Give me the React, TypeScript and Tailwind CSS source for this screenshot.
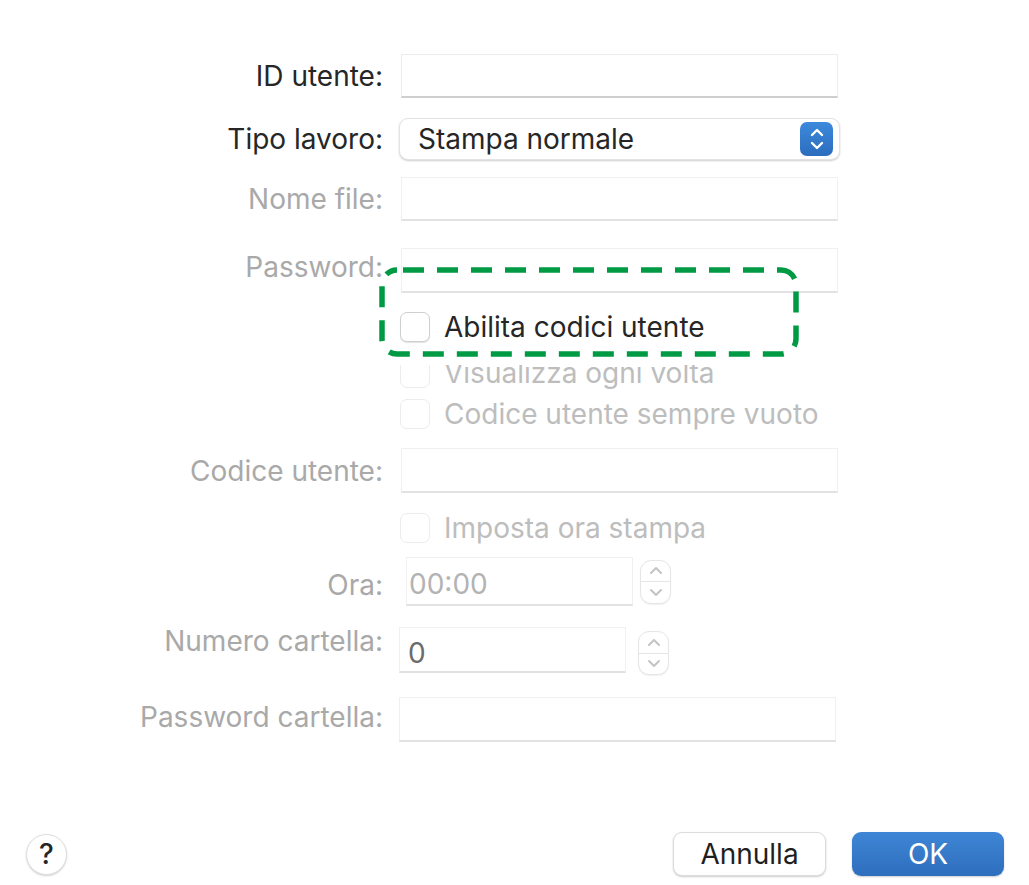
import React from 'react';

const FONT = { fontFamily: 'Inter, "Liberation Sans", sans-serif' };

function Field({ disabled = false, className = '', children }: { disabled?: boolean; className?: string; children?: React.ReactNode }) {
  return (
    <div
      className={`bg-white border flex items-center ${disabled ? 'border-[#f0f0f0] border-b-[#e2e2e2] border-b-2' : 'border-[#ececec] border-b-[#cfcfcf] border-b-2'} ${className}`}
    >
      {children}
    </div>
  );
}

function Checkbox({ label, disabled = false }: { label: string; disabled?: boolean }) {
  return (
    <div className="flex items-center gap-[14px]">
      <div className={`w-[30px] h-[30px] shrink-0 rounded-[7px] bg-white border ${disabled ? 'border-[#ececec]' : 'border-[#cfcfcf] shadow-[0_1px_1px_rgba(0,0,0,0.12)]'}`} />
      <span className={`text-[28px] leading-none ${disabled ? 'text-[#bdbdbd]' : 'text-[#262626]'}`}>{label}</span>
    </div>
  );
}

function Stepper() {
  return (
    <div className="w-[31px] h-[44px] rounded-[11px] border border-[#e6e6e6] bg-white flex flex-col shadow-[0_1px_1px_rgba(0,0,0,0.06)]">
      <div className="flex-1 flex items-center justify-center border-b border-[#e6e6e6]">
        <svg width="14" height="9" viewBox="0 0 14 9" fill="none" stroke="#c4c4c4" strokeWidth="2" strokeLinecap="round" strokeLinejoin="round"><path d="M2 7 L7 2 L12 7" /></svg>
      </div>
      <div className="flex-1 flex items-center justify-center">
        <svg width="14" height="9" viewBox="0 0 14 9" fill="none" stroke="#c4c4c4" strokeWidth="2" strokeLinecap="round" strokeLinejoin="round"><path d="M2 2 L7 7 L12 2" /></svg>
      </div>
    </div>
  );
}

export default function App() {
  const label = 'w-[385px] shrink-0 text-right text-[28px] leading-none pr-[2px] whitespace-nowrap';

  return (
    <div className="relative w-[1029px] h-[885px] bg-white overflow-hidden" style={FONT}>
      <div className="flex flex-col pt-[54px]">
        {/* ID utente */}
        <div className="flex items-center h-[44px]">
          <div className={`${label} text-[#262626]`}>ID utente:</div>
          <Field className="ml-[16px] w-[437px] h-[44px]" />
        </div>

        {/* Tipo lavoro */}
        <div className="flex items-center h-[42px] mt-[20px]">
          <div className={`${label} text-[#262626]`}>Tipo lavoro:</div>
          <div className="ml-[14px] w-[441px] h-[42px] rounded-[9px] bg-white border border-[#e3e3e3] shadow-[0_1px_2px_rgba(0,0,0,0.2)] flex items-center justify-between pl-[18px] pr-[6px]">
            <span className="text-[28px] leading-none text-[#262626]">Stampa normale</span>
            <div className="w-[33px] h-[34px] rounded-[7px] bg-gradient-to-b from-[#3d89dc] to-[#2c6dbd] flex flex-col items-center justify-center gap-[4px]">
              <svg width="14" height="9" viewBox="0 0 14 9" fill="none" stroke="#fff" strokeWidth="2.4" strokeLinecap="round" strokeLinejoin="round"><path d="M2 7 L7 2 L12 7" /></svg>
              <svg width="14" height="9" viewBox="0 0 14 9" fill="none" stroke="#fff" strokeWidth="2.4" strokeLinecap="round" strokeLinejoin="round"><path d="M2 2 L7 7 L12 2" /></svg>
            </div>
          </div>
        </div>

        {/* Nome file */}
        <div className="flex items-center h-[44px] mt-[17px]">
          <div className={`${label} text-[#a9a9a9]`}>Nome file:</div>
          <Field disabled className="ml-[16px] w-[437px] h-[44px]" />
        </div>

        {/* Password */}
        <div className="flex items-start h-[45px] mt-[27px]">
          <div className={`${label} text-[#a9a9a9] mt-[5px]`}>Password:</div>
          <Field disabled className="ml-[16px] w-[437px] h-[45px]" />
        </div>

        {/* Checkboxes */}
        <div className="flex flex-col pl-[400px] mt-[19px] gap-[16px]">
          <Checkbox label="Abilita codici utente" />
          <Checkbox label="Visualizza ogni volta" disabled />
        </div>
        <div className="pl-[400px] mt-[11px]">
          <Checkbox label="Codice utente sempre vuoto" disabled />
        </div>

        {/* Codice utente */}
        <div className="flex items-center h-[45px] mt-[19px]">
          <div className={`${label} text-[#a9a9a9]`}>Codice utente:</div>
          <Field disabled className="ml-[16px] w-[437px] h-[45px]" />
        </div>

        <div className="pl-[400px] mt-[20px]">
          <Checkbox label="Imposta ora stampa" disabled />
        </div>

        {/* Ora */}
        <div className="flex items-center h-[49px] mt-[14px]">
          <div className={`${label} text-[#a9a9a9] pr-0 w-[383px] mt-[7px]`}>Ora:</div>
          <Field disabled className="ml-[21px] w-[227px] h-[49px] pl-[2px] pt-[5px]">
            <span className="text-[28px] leading-none text-[#b3b3b3]">00:00</span>
          </Field>
          <div className="ml-[7px]"><Stepper /></div>
        </div>

        {/* Numero cartella */}
        <div className="flex items-start h-[46px] mt-[21px]">
          <div className={`${label} text-[#a9a9a9]`}>Numero cartella:</div>
          <div className="flex items-start">
            <Field disabled className="ml-[14px] w-[227px] h-[46px] pl-[8px] pt-[6px]">
              <span className="text-[28px] leading-none text-[#6b6b6b]">0</span>
            </Field>
            <div className="ml-[12px] mt-[4px]"><Stepper /></div>
          </div>
        </div>

        {/* Password cartella */}
        <div className="flex items-center h-[45px] mt-[24px]">
          <div className={`${label} text-[#a9a9a9] -mt-[6px]`}>Password cartella:</div>
          <Field disabled className="ml-[14px] w-[437px] h-[45px]" />
        </div>
      </div>

      {/* Bottom buttons */}
      <div className="absolute left-0 right-0 top-[832px] flex items-center pl-[26px] pr-[25px]">
        <div className="w-[41px] h-[41px] rounded-full bg-white border border-[#dedede] shadow-[0_1px_2px_rgba(0,0,0,0.18)] flex items-center justify-center text-[28px] font-medium leading-none text-[#262626]">?</div>
        <div className="ml-auto flex items-center gap-[26px]">
          <div className="w-[153px] h-[44px] rounded-[9px] bg-white border border-[#dcdcdc] shadow-[0_1px_2px_rgba(0,0,0,0.2)] flex items-center justify-center text-[28px] leading-none text-[#1f1f1f]">Annulla</div>
          <div className="w-[152px] h-[44px] rounded-[9px] bg-gradient-to-b from-[#3f86d6] to-[#2e6ebd] shadow-[0_1px_2px_rgba(0,0,0,0.2)] flex items-center justify-center text-[28px] leading-none text-white">OK</div>
        </div>
      </div>

      {/* Dashed highlight annotation, pasted over the row below */}
      <div className="absolute left-[380px] top-[355px] w-[418px] h-[10px] bg-white" />
      <svg className="absolute left-[379px] top-[267px]" width="421" height="91" viewBox="0 0 421 91" fill="none">
        <rect x="3" y="3" width="414" height="84" rx="15" stroke="#009a44" strokeWidth="5.5" strokeDasharray="21 13" strokeDashoffset="-6" />
      </svg>
    </div>
  );
}
